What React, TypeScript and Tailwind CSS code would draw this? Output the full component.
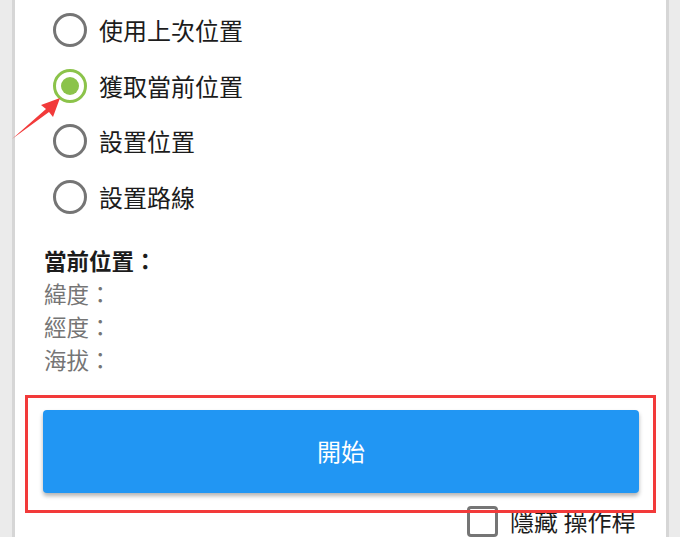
import { useState } from 'react';

const cjk = { fontFamily: '"Noto Sans CJK TC", "Noto Sans", sans-serif' };

const options = ['使用上次位置', '獲取當前位置', '設置位置', '設置路線'];

function Radio({ checked }: { checked: boolean }) {
  return checked ? (
    <span className="flex h-[34px] w-[34px] shrink-0 items-center justify-center rounded-full border-[3.5px] border-[#8bc34a]">
      <span className="h-[18px] w-[18px] rounded-full bg-[#8bc34a]" />
    </span>
  ) : (
    <span className="h-[34px] w-[34px] shrink-0 rounded-full border-[3.5px] border-[#757575]" />
  );
}

export default function App() {
  const [selected, setSelected] = useState(1);
  const [hidden, setHidden] = useState(false);

  return (
    <div className="flex h-[537px] w-[680px] overflow-hidden bg-[#ebebeb]" style={cjk}>
      <div className="w-[12px] shrink-0" />
      <div className="relative flex w-[657px] shrink-0 flex-col border-x-[3px] border-[#d6d6d6] bg-white">
        <div className="flex flex-col pl-[38px] pt-[2.5px]">
          {options.map((label, i) => (
            <button
              key={label}
              onClick={() => setSelected(i)}
              className="flex h-[55.5px] items-center gap-[12px] text-left"
            >
              <Radio checked={selected === i} />
              <span className="text-[24px] leading-none text-[#1c1c1c]">{label}</span>
            </button>
          ))}
        </div>

        <div className="mt-[19.5px] flex flex-col pl-[29px] text-[22.5px] leading-[33px]">
          <span className="font-bold text-[#1c1c1c]">當前位置：</span>
          <span className="text-[#757575]">緯度：</span>
          <span className="text-[#757575]">經度：</span>
          <span className="text-[#757575]">海拔：</span>
        </div>

        <div className="mt-[33.5px] px-[28px]">
          <button className="flex h-[83px] w-[596px] items-center justify-center rounded-[4px] bg-[#2196f3] text-[24px] text-white shadow-[0_3px_4px_rgba(0,0,0,0.3)]">
            開始
          </button>
        </div>

        <button
          onClick={() => setHidden(!hidden)}
          className="ml-[452px] mt-[13px] flex items-center gap-[12px]"
        >
          <span className="h-[31px] w-[31px] shrink-0 rounded-[4px] border-[3.5px] border-[#757575]" />
          <span className="text-[24px] leading-none text-[#1c1c1c]">隱藏 操作桿</span>
        </button>

        <div className="pointer-events-none absolute left-[10px] top-[395px] h-[118px] w-[631px] border-[3px] border-[#f23a3a]" />

        <svg
          className="pointer-events-none absolute left-[-15px] top-0"
          width="80"
          height="150"
          viewBox="0 0 80 150"
        >
          <polygon
            points="60,98 41,105 46,109 12,139 49,112 53,117"
            fill="#f23a3a"
          />
        </svg>
      </div>
      <div className="flex-1" />
    </div>
  );
}
